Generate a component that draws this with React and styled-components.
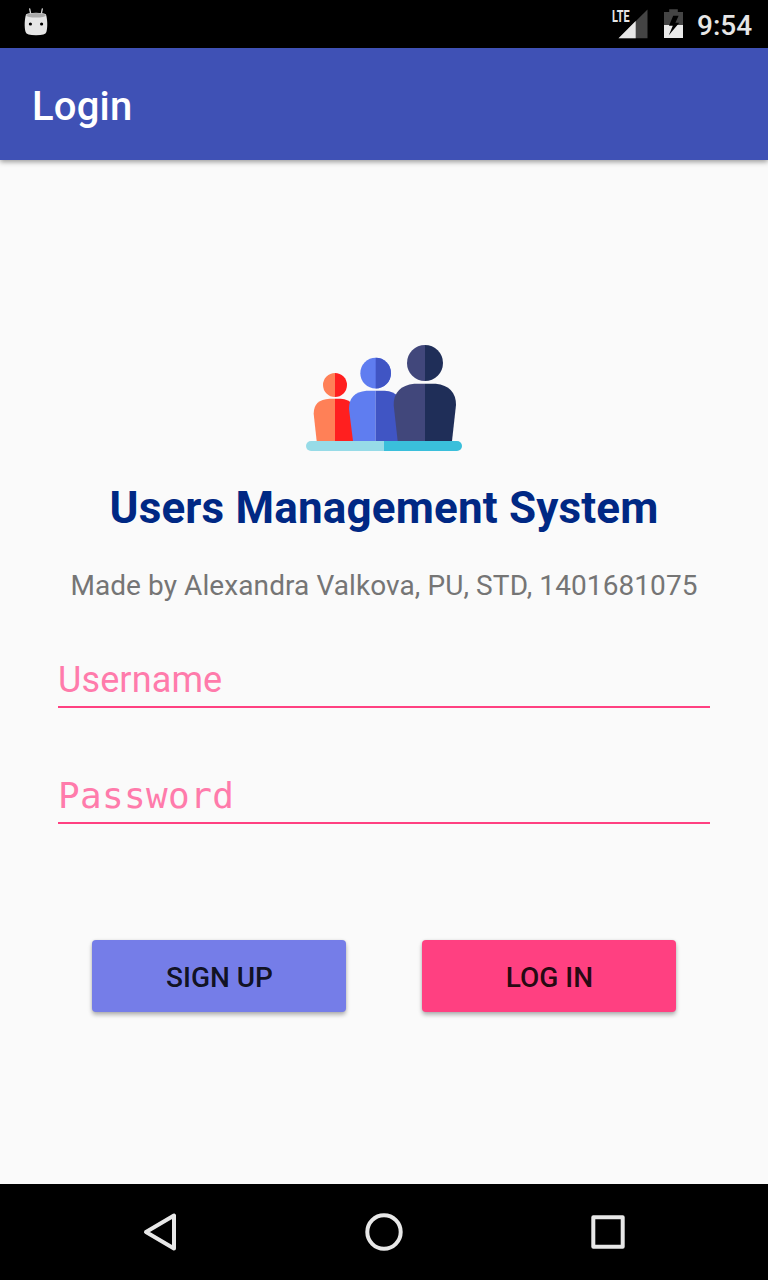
import React from "react";
import styled, { createGlobalStyle } from "styled-components";

const GlobalStyle = createGlobalStyle`
  * { box-sizing: border-box; }
  body { margin: 0; background: #fafafa; font-family: Roboto, sans-serif; }
`;

const Screen = styled.div`
  width: 768px;
  height: 1280px;
  display: flex;
  flex-direction: column;
  background: #fafafa;
  overflow: hidden;
`;

const StatusBar = styled.header`
  height: 48px;
  flex: none;
  display: flex;
  align-items: center;
  padding: 0 16px 0 20px;
  background: #000;
`;

const StatusIcons = styled.div`
  display: flex;
  align-items: center;
  margin-left: auto;
`;

const Clock = styled.span`
  width: 55px;
  margin-left: 13px;
  padding-top: 3px;
  color: #e6e6e6;
  font-size: 28px;
  font-weight: 500;
  line-height: 33px;
  text-align: right;
  white-space: nowrap;
`;

const AppBar = styled.div`
  height: 112px;
  flex: none;
  display: flex;
  align-items: center;
  padding: 6px 32px 0;
  background: #3f51b5;
  box-shadow: 0 2px 5px rgba(0, 0, 0, 0.38);
`;

const AppTitle = styled.h1`
  margin: 0;
  color: #fff;
  font-size: 40px;
  font-weight: 500;
  letter-spacing: 0.2px;
  line-height: 48px;
`;

const Content = styled.main`
  flex: 1;
  display: flex;
  flex-direction: column;
  align-items: center;
  padding-top: 185px;
`;

const Logo = styled.svg`
  width: 156px;
  height: 106px;
  flex: none;
`;

const Title = styled.h2`
  margin: 31px 0 0;
  color: #002884;
  font-size: 44px;
  font-weight: 700;
  letter-spacing: 0.17px;
  line-height: 52px;
  white-space: nowrap;
`;

const Subtitle = styled.p`
  margin: 35px 0 0;
  color: #757575;
  font-size: 28px;
  letter-spacing: 0.09px;
  line-height: 34px;
  white-space: nowrap;
`;

const Form = styled.div`
  width: 652px;
  display: flex;
  flex-direction: column;
  gap: 66px;
  margin-top: 55px;
`;

const Field = styled.label`
  height: 50px;
  display: flex;
  align-items: flex-start;
  border-bottom: 2px solid #ff4081;
`;

const Hint = styled.span`
  color: #ff7bab;
  font-family: ${(p) => (p.$mono ? '"DejaVu Sans Mono", monospace' : "Roboto, sans-serif")};
  font-size: 36px;
  letter-spacing: ${(p) => (p.$mono ? "0.35px" : "0.12px")};
  line-height: 44px;
`;

const Actions = styled.div`
  display: flex;
  gap: 76px;
  margin-top: 116px;
`;

const ActionButton = styled.button`
  width: 254px;
  height: 72px;
  padding: 3px 0 0 1px;
  border: 0;
  border-radius: 4px;
  background: ${(p) => p.$color};
  box-shadow: 0 3px 4px rgba(0, 0, 0, 0.28), 0 0 3px rgba(0, 0, 0, 0.1);
  color: rgba(0, 0, 0, 0.87);
  font-family: Roboto, sans-serif;
  font-size: 28px;
  font-weight: 500;
  line-height: 33px;
`;

const NavBar = styled.nav`
  height: 96px;
  flex: none;
  display: grid;
  grid-template-columns: repeat(3, 224px);
  justify-content: center;
  align-items: center;
  justify-items: center;
  background: #000;
`;

const NavIcon = styled.svg`
  width: 48px;
  height: 48px;
  fill: none;
  stroke: #e8e8e8;
  stroke-width: 4;
  stroke-linejoin: round;
`;

function MarshmallowIcon() {
  return (
    <svg width="32" height="48" viewBox="20 0 32 48">
      <path d="M29.7 8.8l1 5M42.3 8.8l-1 5" stroke="#d8d8d8" strokeWidth="1.3" strokeLinecap="round" />
      <path d="M26 14.5C24.6 19 24.1 27 25.6 32Q26.4 35.2 36 35.2T46.4 32C47.9 27 47.4 19 46 14.5Q44.5 12.8 36 12.8T26 14.5Z" fill="#e6e6e6" />
      <ellipse cx="36" cy="15.3" rx="9.8" ry="2.3" fill="#aaa" />
      <circle cx="30.4" cy="24" r="1.6" fill="#000" />
      <circle cx="41.6" cy="24" r="1.6" fill="#000" />
    </svg>
  );
}

const Signal = styled.div`
  position: relative;
  width: 37px;
  height: 48px;
  margin-right: 16px;
`;

const NetworkType = styled.span`
  position: absolute;
  left: 0.5px;
  top: 9px;
  color: #e6e6e6;
  font-size: 16.5px;
  font-weight: 700;
  line-height: 16px;
  transform: scaleX(0.66);
  transform-origin: left;
`;

function SignalIcon() {
  return (
    <Signal>
      <svg width="37" height="48" viewBox="611 0 37 48">
        <path d="M647.5 9.5V38.3H618.5Z" fill="#444" />
        <path d="M635.7 21.1V38.3H618.5Z" fill="#e6e6e6" />
        <path d="M611 8h21v14.8h-21z" fill="#000" />
      </svg>
      <NetworkType>LTE</NetworkType>
    </Signal>
  );
}

function BatteryIcon() {
  return (
    <svg width="20" height="48" viewBox="664 0 20 48">
      <path d="M664 12h5.2V9.3h8.6V12h5.2v13h-19z" fill="#444" />
      <path d="M664 25h19v13h-19z" fill="#eaeaea" />
      <path d="M673.2 15.8L669 25.7H672.8L668.8 35.2L679.3 22.8H675.4L678.6 15.8Z" fill="#000" />
    </svg>
  );
}

function PeopleLogo() {
  return (
    <Logo viewBox="30 30 468 318">
      <path d="M117 114a36 36 0 0 0 0 72z" fill="#ff8057" />
      <path d="M117 114a36 36 0 0 1 0 72z" fill="#ff1f1f" />
      <path d="M117 191H101Q53 193 53 236L62 318H117z" fill="#ff8057" />
      <path d="M117 191H134Q158 193 172 208V318H117z" fill="#ff1f1f" />
      <circle cx="239" cy="114.5" r="46" fill="#5f7df0" />
      <path d="M239 68.5a46 46 0 0 1 0 92z" fill="#4055c4" />
      <path d="M239 167H211Q159 172 159 221L171 318H239z" fill="#5f7df0" />
      <path d="M239 167H266Q294 169 306 184V318H239z" fill="#4055c4" />
      <path d="M387 30a54 54 0 0 0 0 108z" fill="#41477b" />
      <path d="M387 30a54 54 0 0 1 0 108z" fill="#1f2e58" />
      <path d="M387 146H355Q293 153 293 210L305 318H387z" fill="#41477b" />
      <path d="M387 146H419Q480 153 480 210L468 318H387z" fill="#1f2e58" />
      <path d="M264 318H45a15 15 0 0 0 0 30H264z" fill="#97dbe7" />
      <path d="M264 318H483a15 15 0 0 1 0 30H264z" fill="#3abfdb" />
    </Logo>
  );
}

export default function App() {
  return (
    <Screen>
      <GlobalStyle />
      <StatusBar>
        <MarshmallowIcon />
        <StatusIcons>
          <SignalIcon />
          <BatteryIcon />
          <Clock>9:54</Clock>
        </StatusIcons>
      </StatusBar>
      <AppBar>
        <AppTitle>Login</AppTitle>
      </AppBar>
      <Content>
        <PeopleLogo />
        <Title>Users Management System</Title>
        <Subtitle>Made by Alexandra Valkova, PU, STD, 1401681075</Subtitle>
        <Form>
          <Field>
            <Hint>Username</Hint>
          </Field>
          <Field>
            <Hint $mono>Password</Hint>
          </Field>
        </Form>
        <Actions>
          <ActionButton $color="#757de8">SIGN UP</ActionButton>
          <ActionButton $color="#ff4081">LOG IN</ActionButton>
        </Actions>
      </Content>
      <NavBar>
        <NavIcon viewBox="136 1208 48 48">
          <path d="M174 1215.5V1248.5L146 1232Z" />
        </NavIcon>
        <NavIcon viewBox="360 1208 48 48">
          <circle cx="384" cy="1232" r="16.7" />
        </NavIcon>
        <NavIcon viewBox="584 1208 48 48">
          <rect x="593.3" y="1217.3" width="29.4" height="29.4" />
        </NavIcon>
      </NavBar>
    </Screen>
  );
}
